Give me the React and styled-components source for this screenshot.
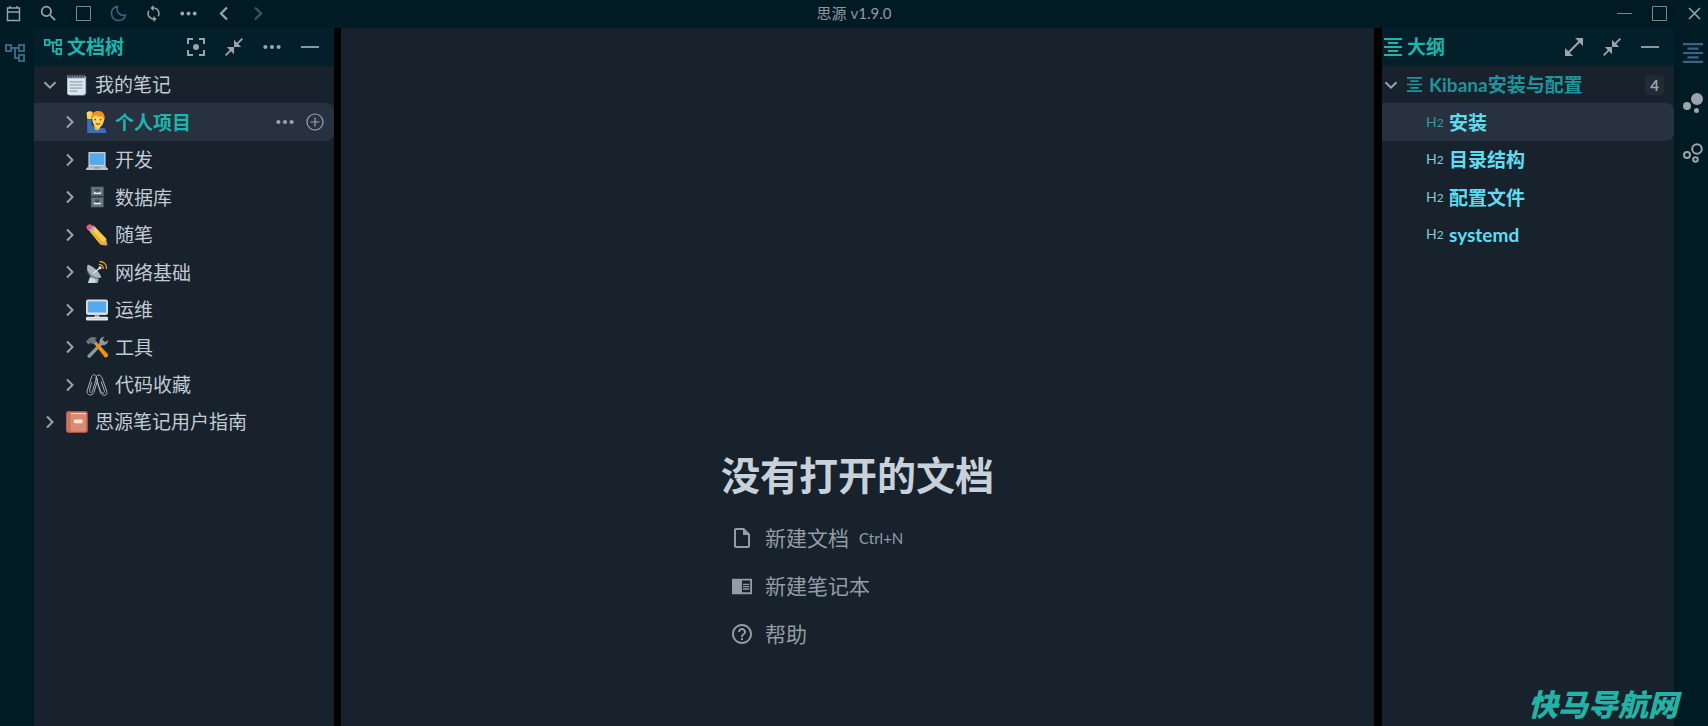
import styled, { createGlobalStyle } from 'styled-components';

const GlobalStyle = createGlobalStyle`
  * {
    box-sizing: border-box;
  }

  body {
    margin: 0;
    background: #011b24;
    color: #c3cad3;
    font-family: Lato, "Noto Sans CJK SC", sans-serif;
    font-size: 19px;
  }

  ul {
    list-style: none;
    margin: 0;
    padding: 0;
  }
`;

// Line icons
const icons = {
  calendar: {
    box: '0 0 17 17',
    art: <path d="M2.5 3h12v12.500h-12zM2.5 7h12M5 1v2M12 1v2" fill="none" stroke="currentColor" strokeWidth="1.4" />,
  },
  search: {
    box: '2 2 20 20',
    art: <path d="M15.5 14h-.79l-.28-.27A6.47 6.47 0 0 0 16 9.5 6.5 6.5 0 1 0 9.5 16c1.61 0 3.09-.59 4.23-1.57l.27.28v.79l5 4.99L20.49 19l-4.99-5zm-6 0C7.01 14 5 11.99 5 9.5S7.01 5 9.5 5 14 7.01 14 9.5 11.99 14 9.5 14z" />,
  },
  square: {
    box: '0 0 17 17',
    art: <path d="M1.5 1.5h14v14h-14z" fill="none" stroke="currentColor" />,
  },
  moon: {
    box: '0 0 17 17',
    art: <path d="M7.4 1.4C3.8 2 1.5 5 1.5 8.5c0 4 3 7 7 7 3.4 0 6.2-2.2 7-5.6C10.5 11.5 5.5 7 7.4 1.4z" fill="none" stroke="currentColor" strokeWidth="1.6" strokeLinejoin="round" />,
  },
  sync: {
    box: '1 1 22 22',
    art: <path d="M12 4V1L8 5l4 4V6c3.31 0 6 2.69 6 6 0 1.01-.25 1.97-.7 2.8l1.46 1.46A7.93 7.93 0 0 0 20 12c0-4.42-3.58-8-8-8zm0 14c-3.31 0-6-2.69-6-6 0-1.01.25-1.97.7-2.8L5.24 7.74A7.93 7.93 0 0 0 4 12c0 4.42 3.58 8 8 8v3l4-4-4-4v3z" />,
  },
  more: {
    box: '0 0 18 18',
    art: <path d="M2.4 6.9a2.1 2.1 0 1 0 0 4.2 2.1 2.1 0 0 0 0-4.2zM9 6.9a2.1 2.1 0 1 0 0 4.2 2.1 2.1 0 0 0 0-4.2zM15.6 6.9a2.1 2.1 0 1 0 0 4.2 2.1 2.1 0 0 0 0-4.2z" />,
  },
  back: {
    box: '0 0 17 17',
    art: <path d="M12 2.5L6 8.5l6 6" fill="none" stroke="currentColor" strokeWidth="2.2" />,
  },
  forward: {
    box: '0 0 17 17',
    art: <path d="M5 2.5l6 6-6 6" fill="none" stroke="currentColor" strokeWidth="2.2" />,
  },
  close: {
    box: '0 0 17 17',
    art: <path d="M3 3l11 11M14 3L3 14" fill="none" stroke="currentColor" strokeWidth="1.6" />,
  },
  line: {
    box: '0 0 17 17',
    art: <path d="M1 8.5h15" fill="none" stroke="currentColor" />,
  },
  minus: {
    box: '0 0 18 18',
    art: <path d="M0 9h18" fill="none" stroke="currentColor" strokeWidth="1.8" />,
  },
  tree: {
    box: '2 2 20 20',
    art: <path d="M22 11V3h-7v3H9V3H2v8h7V8h2v10h4v3h7v-8h-7v3h-2V8h2v3h7zM7 9H4V5h3v4zm10 6h3v4h-3v-4zm0-10h3v4h-3V5z" />,
  },
  focus: {
    box: '3 3 18 18',
    art: <path d="M5 15H3v6h6v-2H5v-4zM5 5h4V3H3v6h2V5zm10-2v2h4v4h2V3h-6zm4 16h-4v2h6v-6h-2v4zM12 9a3 3 0 1 0 0 6 3 3 0 0 0 0-6z" />,
  },
  collapse: {
    box: '2 2 20 20',
    art: <path d="M22 3.41L16.71 8.7 20 12h-8V4l3.29 3.29L20.59 2 22 3.41zM3.41 22l5.29-5.29L12 20v-8H4l3.29 3.29L2 20.59 3.41 22z" />,
  },
  expand: {
    box: '3 3 18 18',
    art: <path d="M21 11V3h-8l3.29 3.29-10 10L3 13v8h8l-3.29-3.29 10-10z" />,
  },
  outline: {
    box: '3 3 18 18',
    art: <path d="M7 15v2h10v-2H7zm-4 6h18v-2H3v2zm0-8h18v-2H3v2zm4-6v2h10V7H7zM3 3v2h18V3H3z" />,
  },
  graph: {
    box: '0 0 20 20',
    art: <path d="M14 0a6 6 0 1 0 0 12 6 6 0 0 0 0-12zM4 9a4 4 0 1 0 0 8 4 4 0 0 0 0-8zM13.5 15a2.5 2.5 0 1 0 0 5 2.5 2.5 0 0 0 0-5z" />,
  },
  globalGraph: {
    box: '0 0 20 20',
    art: (
      <g fill="none" stroke="currentColor" strokeWidth="2">
        <circle cx="14" cy="6" r="4.8" />
        <circle cx="4" cy="12" r="3" />
        <circle cx="12.5" cy="16.5" r="2.3" />
      </g>
    ),
  },
  down: {
    box: '0 0 18 18',
    art: <path d="M3.5 6.2L9 11.7l5.5-5.5" fill="none" stroke="currentColor" strokeWidth="2" />,
  },
  right: {
    box: '0 0 18 18',
    art: <path d="M6 3.5L11.500 9 6 14.500" fill="none" stroke="currentColor" strokeWidth="2" />,
  },
  add: {
    box: '0 0 18 18',
    art: <path d="M9 1a8 8 0 1 0 0 16A8 8 0 0 0 9 1zM9 4.5v9M4.5 9h9" fill="none" stroke="currentColor" strokeWidth="1.2" />,
  },
  file: {
    box: '2 2 20 20',
    art: <path d="M14 2H6c-1.1 0-2 .9-2 2v16c0 1.1.9 2 2 2h12c1.1 0 2-.9 2-2V8l-6-6zM6 20V4h7v5h5v11H6z" />,
  },
  notebook: {
    box: '1 1 22 22',
    art: <path d="M13 12h7v1.5h-7zm0-2.5h7V11h-7zm0 5h7V16h-7zM23 4H1v17h22V4zm-2 15h-9V6h9v13z" />,
  },
  help: {
    box: '2 2 20 20',
    art: <path d="M11 18h2v-2h-2v2zm1-16C6.48 2 2 6.48 2 12s4.48 10 10 10 10-4.48 10-10S17.52 2 12 2zm0 18c-4.41 0-8-3.59-8-8s3.59-8 8-8 8 3.59 8 8-3.59 8-8 8zm0-14c-2.21 0-4 1.79-4 4h2c0-1.1.9-2 2-2s2 .9 2 2c0 2-3 1.75-3 5h2c0-2.25 3-2.5 3-5 0-2.21-1.79-4-4-4z" />,
  },
};

// Coloured icons in front of notebooks and documents
const emojis = {
  notepad: (
    <>
      <path d="M4 4h29v28l-3 3H7c-2 0-3-1-3-3z" fill="#9fb8c9" />
      <path d="M2 3h29v26c0 3-1 5-4 5H5c-2 0-3-1-3-3z" fill="#dbe7f0" />
      <path d="M2 3h29v4H2z" fill="#7e8c97" />
      <path d="M6 0l-2 6M10 0L8 6M14 0l-2 6M18 0l-2 6M22 0l-2 6M26 0l-2 6M30 0l-2 6" stroke="#343f49" strokeWidth="1.7" />
      <path d="M6 13h21M6 18h21M6 23h21M6 28h13" stroke="#7d92a3" strokeWidth="1.6" />
    </>
  ),
  person: (
    <>
      <path d="M2 36V14l7-1v10l9 5h10c3 0 5 2 5 8z" fill="#3b6fb8" />
      <path d="M14 23h9l-1 7-4 2-4-2z" fill="#f0b83d" />
      <path d="M10 10l5-5h11l4 4c0 9-3 14-7 18l-3 2c-6-2-10-8-10-19z" fill="#ffd45c" />
      <path d="M1 3c3-3 8-3 10-1l-2 11H2z" fill="#ffd45c" />
      <path d="M9 11c0-7 4-11 11-11s12 5 10 15l-3-6c-6 0-9-1-11-3-2 2-4 4-7 5z" fill="#f19020" />
      <circle cx="15" cy="14" r="1.4" fill="#664500" />
      <circle cx="24" cy="14" r="1.4" fill="#664500" />
      <path d="M16 20c2 2 5 2 7 0" stroke="#a63d2f" strokeWidth="1.8" fill="none" />
    </>
  ),
  laptop: (
    <>
      <path d="M4 5h28v23H4z" fill="#ccd6dd" />
      <path d="M6 7h24v19H6z" fill="#55a9ee" />
      <path d="M4 28h28l4 5H0z" fill="#aab8c2" />
      <path d="M0 32h36v2H0z" fill="#dae2e8" />
      <path d="M14 30h8l1 2H13z" fill="#7e8d98" />
    </>
  ),
  cabinet: (
    <>
      <path d="M8 1h21v34H8z" fill="#4b5961" />
      <path d="M9 2h19v14H9zM9 19h19v15H9z" fill="#68767f" />
      <path d="M9 16h19v3H9z" fill="#323e45" />
      <path d="M15 5h7v4h-7zM15 22h7v4h-7z" fill="#414e56" />
      <path d="M14 10v2h9v-2M14 27v2h9v-2" stroke="#f0f4f6" strokeWidth="2" fill="none" />
    </>
  ),
  pencil: (
    <>
      <path d="M24 34l12 2-4-13z" fill="#e6a16c" />
      <path d="M7 13l8-8 19 20-3 1-1 4h-4l-2 4z" fill="#ffcc4d" />
      <path d="M7 13l3-3 18 20-4 4z" fill="#efb02f" />
      <path d="M4 10l8-8 4 4-8 8z" fill="#a7b8c2" />
      <path d="M1 7c-2-3 4-8 7-6l4 3-8 7z" fill="#e85d75" />
      <path d="M32 35l4 1-1-4z" fill="#3b3430" />
    </>
  ),
  satellite: (
    <>
      <path d="M4 36l4-15 13 9-2 6z" fill="#99aab5" />
      <path d="M3 6C-3 17 7 33 25 27z" fill="#66757f" />
      <path d="M3 6c5 0 20 11 22 21C13 30-2 17 3 6z" fill="#a9b6bf" />
      <path d="M12 20L23 11" stroke="#e5ebef" strokeWidth="2" />
      <circle cx="23" cy="11" r="2.5" fill="#e5ebef" />
      <path d="M21 6c4-1 8 3 7 7M22 1c7-1 13 6 11 12" stroke="#f4a72e" strokeWidth="2" fill="none" />
      <path d="M3 36l3-8c4-1 9 1 10 5l-1 3z" fill="#ccd6dd" />
    </>
  ),
  desktop: (
    <>
      <rect x="0" y="1" width="36" height="25" rx="3" fill="#d5dee5" />
      <path d="M3 4h30v18H3z" fill="#55a9ee" />
      <path d="M14 26h8v4h-8z" fill="#99aab5" />
      <rect x="0" y="29" width="36" height="6" rx="2" fill="#e1e8ed" />
      <path d="M3 32h30" stroke="#aab8c2" strokeDasharray="2 1" />
    </>
  ),
  tools: (
    <>
      <path d="M3 31L22 12c-1-5 2-10 8-11l-3 5 4 4 5-3c0 6-5 9-10 8L7 35c-3 2-6-1-4-4z" fill="#8899a6" />
      <path d="M12 11l4-3 20 22c1 3-2 6-5 5z" fill="#f4900c" />
      <path d="M0 9l6-6c5-3 12-1 12 1l-3 1 2 4-5 5-4-3-4 3z" fill="#66757f" />
    </>
  ),
  paperclips: (
    <g fill="none" stroke="#aab5bd" strokeWidth="1.6" strokeLinecap="round">
      <path d="M9 14L6 26c-1 5 4 6 5 1l6-20c1-7-6-8-8-2L2 27c-2 8 8 10 11 3l6-20c0-3-2-5-4-3" />
      <path d="M25 13l5 14c1 5-4 6-6 1L17 8c-1-7 6-9 9-2l8 22c2 8-7 9-10 3l-5-16" />
    </g>
  ),
  book: (
    <>
      <rect x="0" y="0" width="36" height="36" rx="4" fill="#a95343" />
      <path d="M6 3h27v28H9c-3 0-5-2-5-4V6z" fill="#f0ddd4" />
      <path d="M8 5h22c2 0 3 1 3 3v26H8z" fill="#dc8b73" />
      <path d="M1 5c0-3 3-4 7-4v34c-4 0-7-1-7-4z" fill="#c9745f" />
      <rect x="13" y="14" width="14" height="6" rx="1" fill="#f5e7df" />
    </>
  ),
};

const Svg = styled.svg`
  display: block;
  flex: none;
  width: ${props => props.$size}px;
  height: ${props => props.$size}px;
  fill: currentColor;
`;

function Icon({ name, size = 18 }) {
  return (
    <Svg $size={size} viewBox={icons[name].box} aria-hidden="true">
      {icons[name].art}
    </Svg>
  );
}

function Emoji({ name }) {
  return (
    <Svg $size={22} viewBox="0 0 36 36" aria-hidden="true">
      {emojis[name]}
    </Svg>
  );
}

const tones = {
  normal: '#9ba3ab',
  dim: '#46535a',
  blue: '#376582',
  soft: '#7b868e',
};

const IconButton = styled.button`
  display: flex;
  flex: none;
  border: none;
  padding: 0;
  background: none;
  color: ${props => tones[props.$tone || 'normal']};
  cursor: pointer;
`;

// Window
const Window = styled.div`
  display: flex;
  flex-direction: column;
  min-height: 100vh;
`;

const TopBar = styled.header`
  display: grid;
  grid-template-columns: 1fr auto 1fr;
  align-items: center;
  height: 28px;
  padding: 0 5px 2px;
`;

const TopGroup = styled.div`
  display: flex;
  gap: 18px;
  justify-content: ${props => (props.$end ? 'flex-end' : 'flex-start')};
`;

const TopTitle = styled.span`
  color: #8f989f;
  font-size: 15px;
  line-height: 20px;
`;

const Body = styled.div`
  display: flex;
  flex: 1;
`;

const Dock = styled.nav`
  display: flex;
  flex-direction: column;
  align-items: ${props => (props.$side === 'left' ? 'flex-start' : 'flex-end')};
  flex: 0 0 34px;
  padding: 0 5px;

  button {
    height: 50px;
    align-items: center;
  }
`;

const Panel = styled.aside`
  flex: 0 0 ${props => props.$width}px;
  background: #17222d;
`;

const Resizer = styled.div`
  flex: 0 0 ${props => props.$width}px;
  background: #000;
`;

const PanelHeader = styled.div`
  display: flex;
  align-items: center;
  height: 38px;
  padding: 0 15px 0 ${props => props.$inset}px;
  background: #031f2a;
`;

const PanelTitle = styled.h2`
  display: flex;
  flex: 1;
  align-items: center;
  gap: 5px;
  margin: 0;
  color: #1db5ad;
  font-size: 19px;
  line-height: 28px;
`;

const Actions = styled.div`
  display: flex;
  gap: ${props => props.$gap}px;
`;

// Tree rows
const Row = styled.div`
  display: flex;
  align-items: center;
  height: 37px;
  padding: 0 10px 0 ${props => props.$inset}px;
  border-radius: 0 8px 8px 0;
  background: ${props => (props.$active ? '#28313f' : 'transparent')};
`;

const SubList = styled.ul`
  li:nth-child(odd) ${Row} {
    height: 38px;
  }
`;

const RowLink = styled.a`
  display: flex;
  flex: 1;
  align-items: center;
  gap: 7px;
  margin-left: 7px;
  color: ${props => (props.$active ? '#1db5ad' : '#c3cad3')};
  font-weight: ${props => (props.$active ? 700 : 400)};
  line-height: 27px;
  text-decoration: none;
`;

const RootLink = styled(RowLink)`
  color: #1e949c;
  font-weight: 700;
`;

const HeadingLink = styled(RowLink)`
  margin-left: 0;
  color: #60dcf0;
  font-weight: 700;
`;

const Level = styled.span`
  width: 16px;
  color: ${props => (props.$active ? '#3a979e' : '#86c9d4')};
  font-size: 14px;
  font-weight: 400;
  line-height: 20px;
  white-space: nowrap;

  small {
    font-size: 12px;
  }
`;

const Count = styled.span`
  padding: 0 5px;
  border-radius: 4px;
  background: #212b36;
  color: #9ba3ab;
  font-size: 15px;
  font-weight: 700;
  line-height: 20px;
`;

// Empty editor
const Editor = styled.main`
  display: flex;
  flex: 1;
  flex-direction: column;
  align-items: center;
  justify-content: flex-end;
  padding-bottom: 68px;
  background: #17222d;
`;

const EmptyTitle = styled.h1`
  margin: 0 0 10px;
  color: #c8d1da;
  font-size: 39px;
  line-height: 58px;
`;

const MenuItem = styled.button`
  display: flex;
  align-items: center;
  gap: 13px;
  height: 48px;
  padding: 0 11px;
  border: none;
  background: none;
  color: #949ca4;
  font-family: inherit;
  font-size: 21px;
  cursor: pointer;
`;

const MenuText = styled.span`
  display: flex;
  align-items: center;
  gap: 10px;
  line-height: 30px;
`;

const Shortcut = styled.kbd`
  font-family: inherit;
  font-size: 15px;
`;

const SiteMark = styled.div`
  position: absolute;
  right: 30px;
  bottom: 4px;
  color: #24b2a5;
  font-size: 30px;
  font-style: italic;
  font-weight: 900;
  line-height: 36px;
`;

const docs = [
  { title: '个人项目', emoji: 'person', active: true },
  { title: '开发', emoji: 'laptop' },
  { title: '数据库', emoji: 'cabinet' },
  { title: '随笔', emoji: 'pencil' },
  { title: '网络基础', emoji: 'satellite' },
  { title: '运维', emoji: 'desktop' },
  { title: '工具', emoji: 'tools' },
  { title: '代码收藏', emoji: 'paperclips' },
];

const headings = ['安装', '目录结构', '配置文件', 'systemd'];

function TreeRow({ title, emoji, active, open, inset }) {
  return (
    <Row $inset={inset} $active={active}>
      <IconButton aria-label="展开">
        <Icon name={open ? 'down' : 'right'} />
      </IconButton>
      <RowLink href="#" $active={active}>
        <Emoji name={emoji} />
        {title}
      </RowLink>
      {active && (
        <Actions $gap={12}>
          <IconButton aria-label="更多"><Icon name="more" /></IconButton>
          <IconButton aria-label="新建子文档"><Icon name="add" /></IconButton>
        </Actions>
      )}
    </Row>
  );
}

function FileTree() {
  return (
    <Panel $width={300}>
      <PanelHeader $inset={10}>
        <PanelTitle><Icon name="tree" />文档树</PanelTitle>
        <Actions $gap={20}>
          <IconButton aria-label="定位"><Icon name="focus" /></IconButton>
          <IconButton aria-label="折叠"><Icon name="collapse" /></IconButton>
          <IconButton aria-label="更多"><Icon name="more" /></IconButton>
          <IconButton aria-label="最小化"><Icon name="minus" /></IconButton>
        </Actions>
      </PanelHeader>
      <ul>
        <li>
          <TreeRow title="我的笔记" emoji="notepad" inset={7} open />
          <SubList>
            {docs.map(doc => (
              <li key={doc.title}>
                <TreeRow {...doc} inset={27} />
              </li>
            ))}
          </SubList>
        </li>
        <li>
          <TreeRow title="思源笔记用户指南" emoji="book" inset={7} />
        </li>
      </ul>
    </Panel>
  );
}

function Outline() {
  return (
    <Panel $width={292}>
      <PanelHeader $inset={2}>
        <PanelTitle><Icon name="outline" />大纲</PanelTitle>
        <Actions $gap={20}>
          <IconButton aria-label="展开"><Icon name="expand" /></IconButton>
          <IconButton aria-label="折叠"><Icon name="collapse" /></IconButton>
          <IconButton aria-label="最小化"><Icon name="minus" /></IconButton>
        </Actions>
      </PanelHeader>
      <Row $inset={0}>
        <IconButton aria-label="折叠"><Icon name="down" /></IconButton>
        <RootLink href="#">
          <Icon name="outline" size={15} />
          Kibana安装与配置
        </RootLink>
        <Count>4</Count>
      </Row>
      <SubList>
        {headings.map((text, i) => (
          <li key={text}>
            <Row $inset={44} $active={i === 0}>
              <HeadingLink href="#">
                <Level $active={i === 0}>H<small>2</small></Level>
                {text}
              </HeadingLink>
            </Row>
          </li>
        ))}
      </SubList>
    </Panel>
  );
}

function EmptyEditor() {
  return (
    <Editor>
      <div>
        <EmptyTitle>没有打开的文档</EmptyTitle>
        <MenuItem>
          <Icon name="file" size={20} />
          <MenuText>新建文档 <Shortcut>Ctrl+N</Shortcut></MenuText>
        </MenuItem>
        <MenuItem>
          <Icon name="notebook" size={20} />
          <MenuText>新建笔记本</MenuText>
        </MenuItem>
        <MenuItem>
          <Icon name="help" size={20} />
          <MenuText>帮助</MenuText>
        </MenuItem>
      </div>
    </Editor>
  );
}

export default function App() {
  return (
    <>
      <GlobalStyle />
      <Window>
        <TopBar>
          <TopGroup>
            <IconButton aria-label="日历"><Icon name="calendar" size={17} /></IconButton>
            <IconButton aria-label="搜索"><Icon name="search" size={17} /></IconButton>
            <IconButton aria-label="全屏" $tone="soft"><Icon name="square" size={17} /></IconButton>
            <IconButton aria-label="主题" $tone="blue"><Icon name="moon" size={17} /></IconButton>
            <IconButton aria-label="同步"><Icon name="sync" size={17} /></IconButton>
            <IconButton aria-label="更多"><Icon name="more" size={17} /></IconButton>
            <IconButton aria-label="后退"><Icon name="back" size={17} /></IconButton>
            <IconButton aria-label="前进" $tone="dim"><Icon name="forward" size={17} /></IconButton>
          </TopGroup>
          <TopTitle>思源 v1.9.0</TopTitle>
          <TopGroup $end>
            <IconButton aria-label="最小化" $tone="soft"><Icon name="line" size={17} /></IconButton>
            <IconButton aria-label="最大化" $tone="soft"><Icon name="square" size={17} /></IconButton>
            <IconButton aria-label="关闭"><Icon name="close" size={17} /></IconButton>
          </TopGroup>
        </TopBar>
        <Body>
          <Dock $side="left">
            <IconButton aria-label="文档树" $tone="blue"><Icon name="tree" size={20} /></IconButton>
          </Dock>
          <FileTree />
          <Resizer $width={7} />
          <EmptyEditor />
          <Resizer $width={8} />
          <Outline />
          <Dock $side="right">
            <IconButton aria-label="大纲" $tone="blue"><Icon name="outline" size={20} /></IconButton>
            <IconButton aria-label="关系图"><Icon name="graph" size={20} /></IconButton>
            <IconButton aria-label="全局关系图"><Icon name="globalGraph" size={20} /></IconButton>
          </Dock>
        </Body>
        <SiteMark>快马导航网</SiteMark>
      </Window>
    </>
  );
}
